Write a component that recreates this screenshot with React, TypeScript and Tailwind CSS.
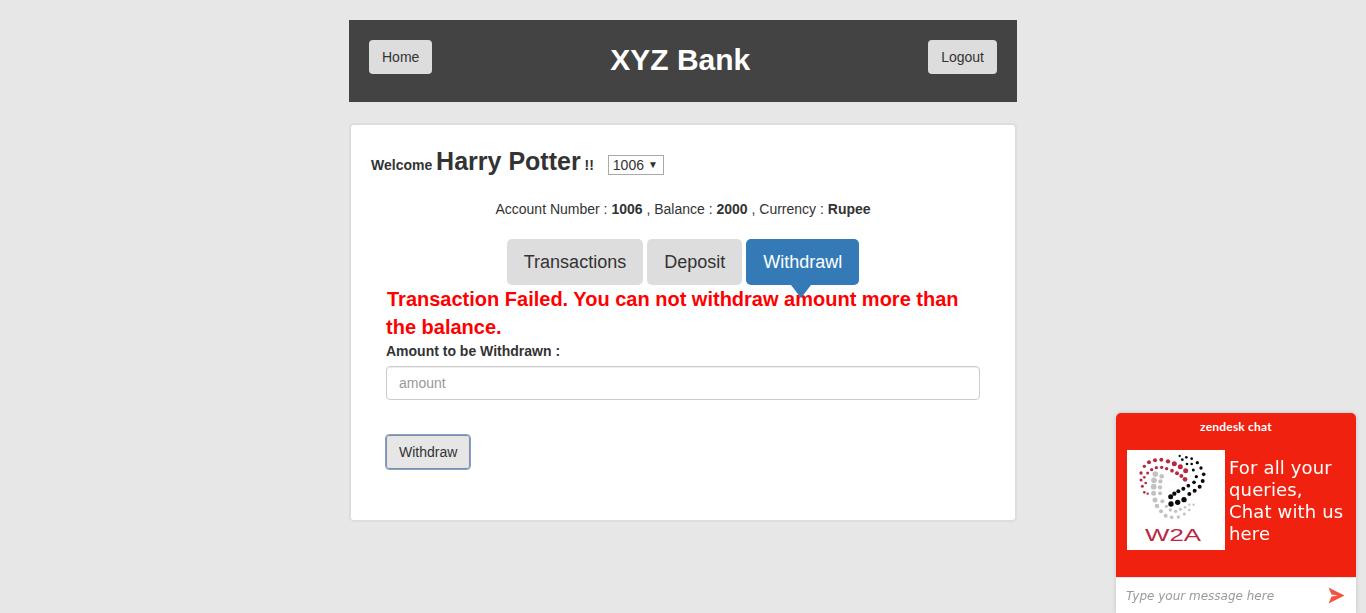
import React from 'react';

type Dot = [number, number, number];

const RED_DOTS: Dot[] = [
  [48, 75, 5], [58, 55, 5], [72, 43, 6], [90, 37, 6], [109, 35, 6], [129, 40, 6.5], [148, 47, 7.5], [166, 56, 7.5], [182, 68, 7.5],
  [48, 96, 4.5], [52, 115, 4.5], [58, 133, 4], [68, 137, 3.5], [62, 105, 4], [58, 88, 4], [68, 75, 4.5], [80, 65, 5],
  [94, 59, 5], [110, 58, 5], [125, 62, 5], [141, 68, 5.5], [156, 76, 6], [169, 84, 6], [180, 94, 7],
];

const GREY_DOTS: Dot[] = [
  [91, 78, 8.5], [110, 85, 7], [87, 97, 8.5], [106, 100, 6.5], [86, 116, 8.5], [105, 118, 6.5], [86, 136, 7.5], [105, 136, 6],
  [90, 156, 7.5], [112, 160, 6], [96, 174, 7], [124, 175, 5], [108, 190, 6], [136, 186, 5], [152, 190, 5], [166, 184, 4.5],
  [180, 178, 4], [122, 203, 6], [140, 208, 5.5], [160, 207, 5], [178, 198, 4.5], [193, 186, 4], [206, 170, 3.5], [193, 170, 3.5],
];

const BLACK_DOTS: Dot[] = [
  [164, 24, 3.5], [184, 28, 4], [200, 32, 4], [217, 44, 5], [228, 60, 5], [236, 79, 5.5], [233, 99, 6], [224, 116, 6],
  [209, 128, 6], [193, 138, 6], [172, 35, 4], [186, 48, 4], [200, 48, 4], [205, 66, 4.5], [214, 86, 5], [207, 103, 5.5],
  [190, 113, 5.5], [175, 122, 6], [160, 130, 6], [148, 137, 6.5], [137, 146, 7.5], [138, 168, 8], [158, 163, 8], [177, 155, 8],
];

const W2ALogo = () => (
  <svg width="98" height="100" viewBox="6 6 294 300">
    <rect x="6" y="6" width="294" height="300" fill="#ffffff" />
    {RED_DOTS.map(([cx, cy, r]) => <circle key={`r${cx}-${cy}`} cx={cx} cy={cy} r={r} fill="#b9283f" />)}
    {GREY_DOTS.map(([cx, cy, r]) => <circle key={`g${cx}-${cy}`} cx={cx} cy={cy} r={r} fill="#c2c2c2" />)}
    {BLACK_DOTS.map(([cx, cy, r]) => <circle key={`b${cx}-${cy}`} cx={cx} cy={cy} r={r} fill="#0c0c0c" />)}
    <text x="60" y="278" textLength="168" lengthAdjust="spacingAndGlyphs" fontFamily="Liberation Sans, sans-serif" fontSize="52" fill="#b9283f">W2A</text>
  </svg>
);

const ChatWidget = () => (
  <div className="fixed right-[10px] bottom-0 w-[240px] h-[200px] flex flex-col rounded-t-[5px] overflow-hidden shadow-[0_0_4px_rgba(0,0,0,0.15)]">
    <div className="flex-1 bg-[#f0210f] text-white">
      <div className="h-[28px] text-center text-[12px] font-bold leading-[28px] tracking-[0.2px] font-['Lato',sans-serif]">zendesk chat</div>
      <div className="flex items-start pl-[11px] pt-[9px]">
        <W2ALogo />
        <div className="pl-[4px] pt-[7px] text-[18px] leading-[22px] tracking-[0.15px] font-['DejaVu_Sans',sans-serif]">
          For all your<br />queries,<br />Chat with us<br />here
        </div>
      </div>
    </div>
    <div className="h-[36px] bg-white border-t border-[#e5e5e5] flex items-center justify-between pl-[10px] pr-[11px]">
      <span className="mt-[2px] text-[12px] italic text-[#9a9a9a] font-['DejaVu_Sans',sans-serif]">Type your message here</span>
      <svg width="17" height="17" viewBox="0 0 17 17">
        <path d="M0.5 0.5 L16.5 8.5 L0.5 16.5 L3.5 9.5 L10 8.5 L3.5 7.5 Z" fill="#f4523f" />
      </svg>
    </div>
  </div>
);

const App: React.FC = () => {
  return (
    <div className="min-h-screen bg-[#e7e7e7] pt-5 text-sm text-[#333333] font-['Liberation_Sans',Arial,sans-serif]">
      <div className="w-[668px] mx-auto">
        {/* Header */}
        <header className="h-[82px] bg-[#434343] px-5 pt-5 flex items-start justify-between">
          <button className="h-[34px] px-[13px] rounded bg-[#dddddd] text-sm text-[#333333]">Home</button>
          <h1 className="text-[30px] leading-[40px] font-bold text-white">XYZ Bank</h1>
          <button className="h-[34px] px-[13px] rounded bg-[#dddddd] text-sm text-[#333333]">Logout</button>
        </header>

        {/* Main card */}
        <main className="mt-[21px] h-[399px] bg-white border-2 border-[#dddddd] rounded-[5px] pt-[19px] px-5">
          <div className="flex items-center h-[36px]">
            <span className="font-bold">
              Welcome <span className="text-[25px]">Harry Potter</span> !!
            </span>
            <div className="ml-[14px] mt-[6px] w-[56px] h-[20px] border border-[#a9a9a9] flex items-center justify-between pl-[4px] pr-[5px]">
              <span>1006</span>
              <span className="text-[10px]">▼</span>
            </div>
          </div>

          <p className="mt-[19px] text-center leading-[20px]">
            Account Number : <b>1006</b> , Balance : <b>2000</b> , Currency : <b>Rupee</b>
          </p>

          <nav className="mt-5 flex justify-center gap-1">
            <a className="h-[46px] px-[17px] rounded-[5px] bg-[#dddddd] text-[18px] leading-[46px]">Transactions</a>
            <a className="h-[46px] px-[17px] rounded-[5px] bg-[#dddddd] text-[18px] leading-[46px]">Deposit</a>
            <a className="relative h-[46px] px-[17px] rounded-[5px] bg-[#337ab7] text-white text-[18px] leading-[46px]">
              Withdrawl
              <span className="absolute left-1/2 -ml-[12px] top-full w-0 h-0 border-x-[10px] border-x-transparent border-t-[13px] border-t-[#337ab7]" />
            </a>
          </nav>

          <div className="px-[15px]">
            <p className="text-[20px] leading-[28px] font-bold text-[#ff0000] indent-[1px] w-[594px]">
              Transaction Failed. You can not withdraw amount more than the balance.
            </p>
            <label className="block font-bold leading-[20px]">Amount to be Withdrawn :</label>
            <input
              placeholder="amount"
              className="mt-[5px] block w-[594px] h-[34px] px-3 bg-white border border-[#cccccc] rounded text-sm placeholder:text-[#999999] shadow-[inset_0_1px_1px_rgba(0,0,0,0.075)]"
            />
            <button className="mt-[35px] block h-[34px] px-3 w-[84px] rounded-[3px] bg-[#e6e6e6] border border-[#8c8c8c] text-sm text-[#333333] outline outline-[#7ba4e4] outline-offset-0">
              Withdraw
            </button>
          </div>
        </main>
      </div>

      <ChatWidget />
    </div>
  );
};

export default App;
